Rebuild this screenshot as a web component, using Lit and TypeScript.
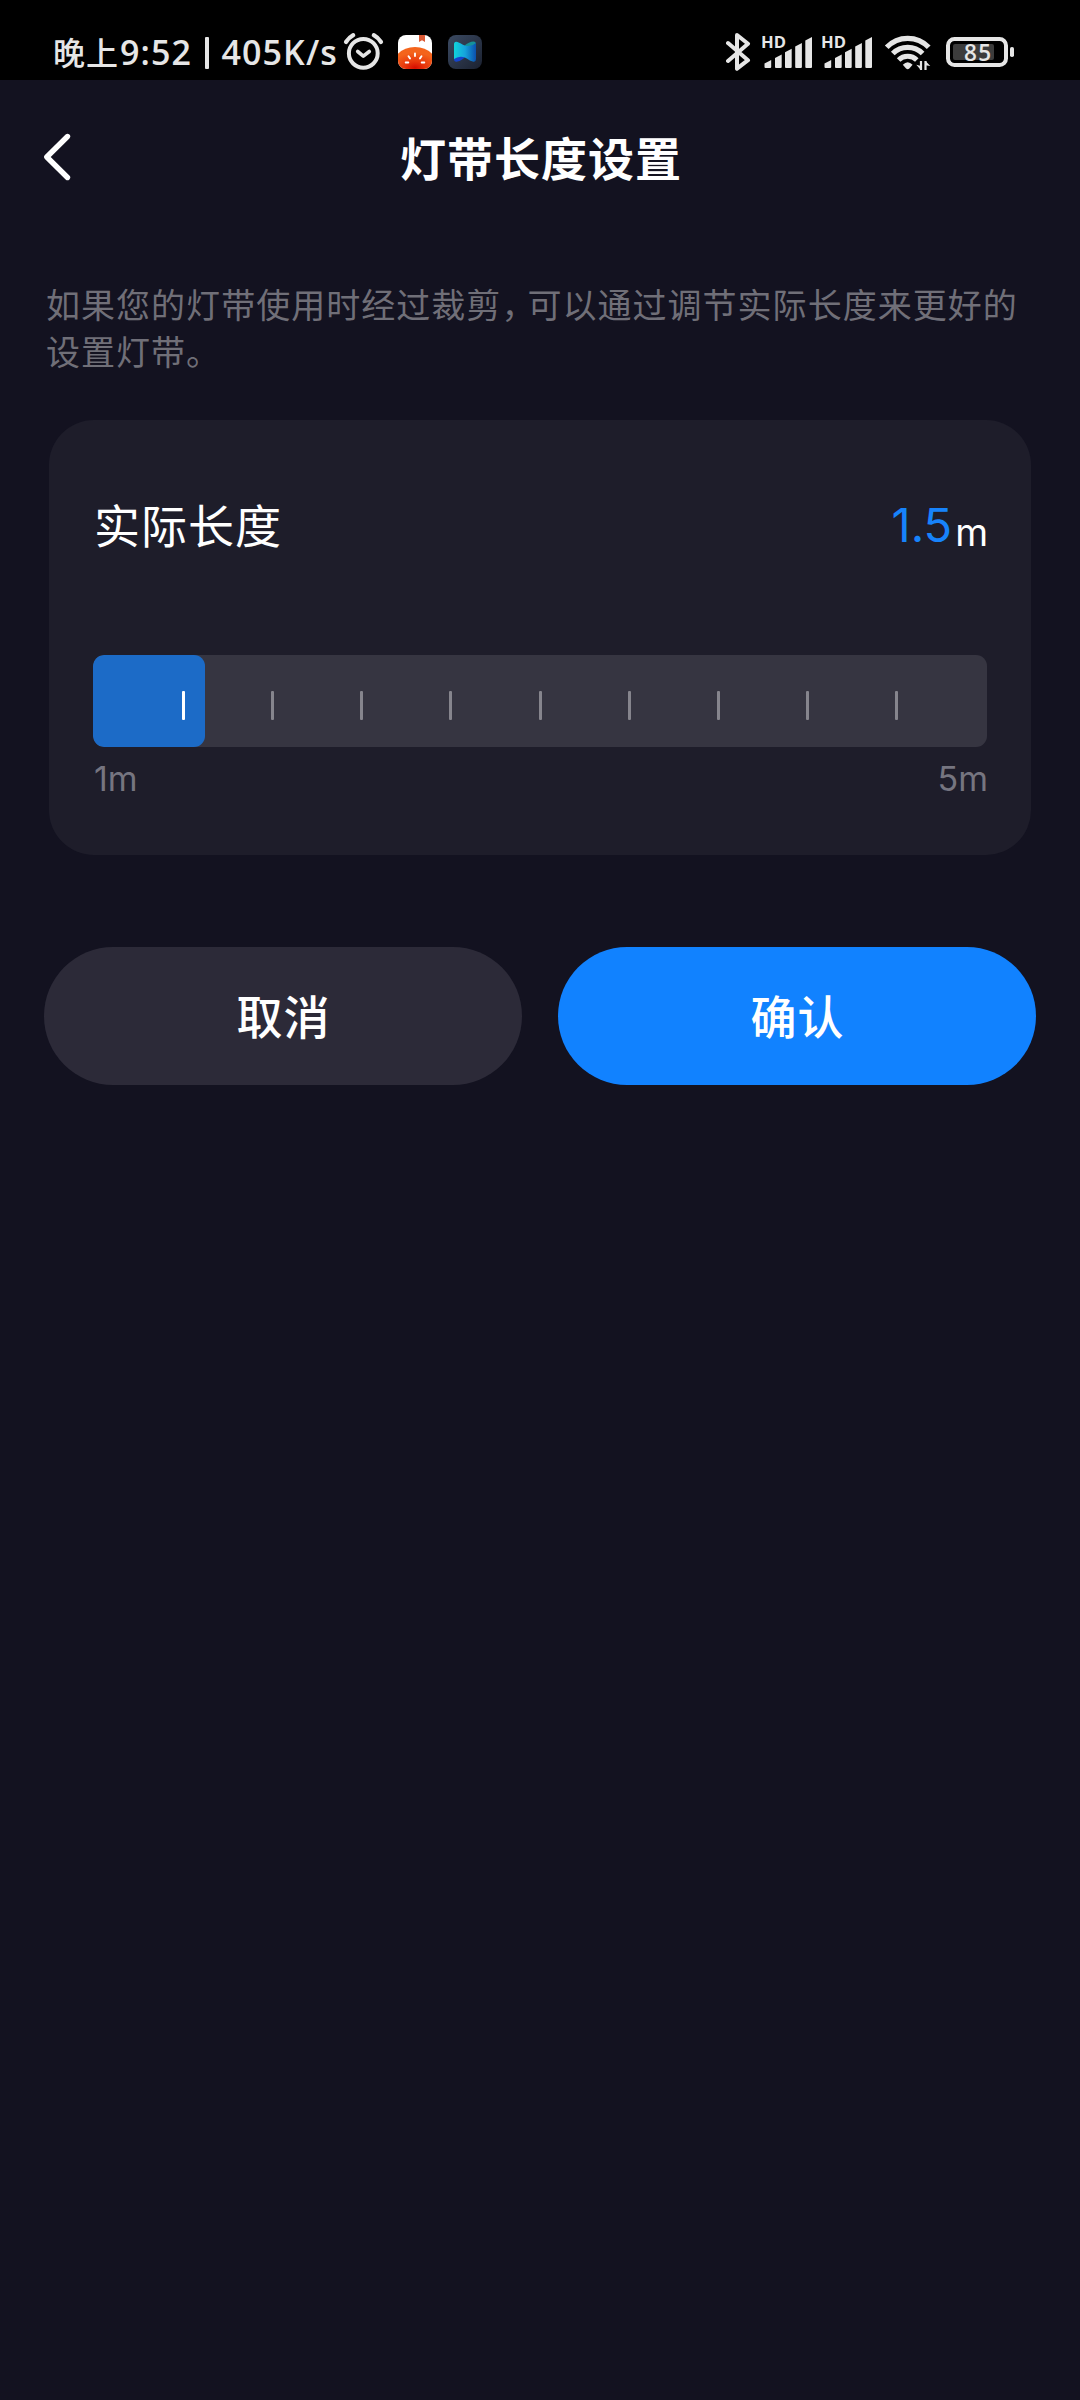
import { LitElement, html, css, svg } from "lit";
import { customElement, property, state } from "lit/decorators.js";

/** System status bar: clock, network speed, notification and radio icons. */
@customElement("status-bar")
class StatusBar extends LitElement {
  static styles = css`
    :host {
      display: flex;
      align-items: flex-start;
      box-sizing: border-box;
      height: 80px;
      padding: 0 66px 0 53px;
      background: #000;
      color: #e6e6e6;
    }
    .clock {
      display: flex;
      align-items: flex-start;
      width: 290px;
      height: 80px;
      font: 600 34px/40px "Open Sans", sans-serif;
      letter-spacing: 1.1px;
      white-space: pre;
    }
    .clock span {
      margin-top: 32px;
    }
    .clock .zh {
      margin-top: 31px;
      font: 500 32px/40px "Noto Sans CJK SC", sans-serif;
      letter-spacing: 1px;
      width: 67px;
    }
    .time {
      width: 85px;
    }
    .clock .bar {
      width: 4px;
      height: 32px;
      margin: 37px 12.5px 0 0;
      border-radius: 1px;
      background: #e6e6e6;
    }
    svg {
      display: block;
      flex: none;
      height: 80px;
    }
    .app {
      margin-left: 14px;
    }
    .app + .app {
      margin-left: 16px;
    }
    .right {
      display: flex;
      margin-left: auto;
    }
    .right svg + svg {
      margin-left: 10px;
    }
    .right svg + .wifi {
      margin-left: 12px;
    }
    .right .wifi + svg {
      margin-left: 14px;
    }
    .hd {
      font: 700 16px "Open Sans", sans-serif;
    }
    .pct {
      font: 600 22.5px "Open Sans", sans-serif;
    }
  `;

  private signal() {
    return html`<svg width="50" viewBox="762 0 50 80" fill="#e6e6e6">
      <text class="hd" x="761" y="47.7" textLength="25" lengthAdjust="spacingAndGlyphs">HD</text>
      ${[
        [764.5, 60],
        [775, 54.5],
        [785, 48.7],
        [795.2, 43],
        [805.3, 37],
      ].map(
        ([x, y]) =>
          svg`<path d=${`M${x} ${y + 3.6}L${x + 6.7} ${y}V67a1 1 0 0 1-1 1h-4.7a1 1 0 0 1-1-1z`} />`
      )}
    </svg>`;
  }

  render() {
    return html`
      <div class="clock">
        <span class="zh">晚上</span><span class="time">9:52</span><i class="bar"></i
        ><span>405K/s</span>
      </div>
      <svg width="41" viewBox="343 0 41 80" fill="none" stroke="#e6e6e6" stroke-linecap="round">
        <circle cx="363.3" cy="53.3" r="14.4" stroke-width="4" />
        <path d="M357.7 51.5l5.600 4.600 6-4.600" stroke-width="3.600" stroke-linejoin="round" />
        <path d="M346 42q3-4.500 7.200-6.800M381 42q-3-4.500-7.200-6.800" stroke-width="4.200" />
      </svg>
      <svg class="app" width="34" viewBox="398 0 34 80">
        <defs>
          <radialGradient id="tomato" cx=".5" cy=".9" r=".65">
            <stop offset="0" stop-color="#d60d00" />
            <stop offset=".4" stop-color="#e8360c" />
            <stop offset="1" stop-color="#f4641c" />
          </radialGradient>
          <clipPath id="tile"><rect x="398" y="35" width="34" height="34" rx="8" /></clipPath>
        </defs>
        <g clip-path="url(#tile)">
          <rect x="398" y="35" width="34" height="34" fill="#fff" />
          <path d="M419 35h6v7l-3-1.700-3 1.700z" fill="#dc5a35" />
          <path d="M396 56Q403 47 415 47t19 9v14h-38z" fill="url(#tomato)" />
          <path
            d="M415 53.500v2.600M408.500 56.300l1.500 2.100M421.500 56.300l-1.500 2.100M405.700 62.500h2.600M421.700 62.500h2.600"
            stroke="#fff"
            stroke-width="1.900"
            stroke-linecap="round"
          />
        </g>
      </svg>
      <svg class="app" width="34" viewBox="448 0 34 80">
        <defs>
          <linearGradient id="slate" x1="0" y1="0" x2="1" y2="1">
            <stop offset="0" stop-color="#3b4a62" />
            <stop offset="1" stop-color="#1b2130" />
          </linearGradient>
          <linearGradient id="ribbon">
            <stop offset="0" stop-color="#10d4dc" />
            <stop offset=".5" stop-color="#16a3dc" />
            <stop offset="1" stop-color="#0b50ae" />
          </linearGradient>
        </defs>
        <rect x="448" y="35" width="34" height="34" rx="8" fill="url(#slate)" />
        <path d="M464 46q5-4.500 9.500-4.500 2.500 0 2.500 3v4z" fill="#15929a" />
        <path d="M454 54v5q0 3.500 3.500 2.600 4-.9 9-5.600z" fill="#1544cc" />
        <path
          d="M454 44.500Q454 41 457.500 42q3 1 5.500 2.800 2.500 1.600 6 1.200 4-.6 7-3V59q0 3.500-3.300 2.500-3-.8-5.500-2.800-3-2.300-6.700-2-3.600.4-6.500 2.300z"
          fill="url(#ribbon)"
        />
      </svg>
      <div class="right">
        <svg width="26" viewBox="726 0 26 80" fill="none" stroke="#e6e6e6" stroke-width="4">
          <path
            d="M728 43l20 17.200-11 8.500V35l11 8.700-20 17.300"
            stroke-linecap="round"
            stroke-linejoin="round"
          />
        </svg>
        ${this.signal()} ${this.signal()}
        <svg class="wifi" width="48" viewBox="884 0 48 80" fill="none" stroke="#e6e6e6">
          <path d="M886.700 47.300a29 29 0 0 1 42 0" stroke-width="5.200" />
          <path d="M892.800 53.500a21 21 0 0 1 29.800 0" stroke-width="5.200" />
          <path d="M898.600 60a13 13 0 0 1 18.200 0" stroke-width="5" />
          <path d="M902.800 64.700q4.900-5 9.800 0L909.300 68.600q-1.600 1.200-3.200 0z" fill="#e6e6e6" stroke="none" />
          <path d="M921 61v9M925.500 70V61" stroke-width="2.200" />
          <path d="M916.300 64.700l4.700 1.300v4.200zM930.300 66l-4.800-.8V61z" fill="#e6e6e6" stroke="none" />
        </svg>
        <svg width="68" viewBox="946 0 68 80" fill="none">
          <rect x="948" y="39" width="58" height="26" rx="6.500" stroke="#e6e6e6" stroke-width="4" />
          <rect x="953" y="44" width="41" height="16" rx="2" fill="#3c3c3c" />
          <rect x="1010" y="47" width="4" height="10" rx="1.800" fill="#e6e6e6" />
          <text class="pct" x="964" y="60.800" textLength="27" fill="#e6e6e6">85</text>
        </svg>
      </div>
    `;
  }
}

/** Segmented strip-length slider with a tick before each step boundary. */
@customElement("length-slider")
class LengthSlider extends LitElement {
  @property({ type: Number }) min = 1;
  @property({ type: Number }) max = 5;
  @property({ type: Number }) value = 1.5;
  @property({ type: Number }) step = 0.5;

  static styles = css`
    :host {
      display: block;
    }
    .track {
      display: grid;
      height: 92px;
      border-radius: 11px;
      background: #363541;
      overflow: hidden;
    }
    .fill,
    .ticks {
      grid-area: 1 / 1;
    }
    .fill {
      border-radius: 11px;
      background: #1c6bc7;
    }
    .ticks {
      display: flex;
      justify-content: space-between;
      padding: 36px 89px 27px;
    }
    .tick {
      width: 3px;
      border-radius: 1px;
      background: #86858d;
    }
    .tick.on {
      background: #fff;
    }
    .ends {
      display: flex;
      justify-content: space-between;
      margin-top: 9px;
      padding-left: 1px;
      margin-right: -1px;
      font: 400 34px/46px Inter, sans-serif;
      color: #767580;
    }
  `;

  render() {
    const ratio = (this.value - this.min) / (this.max - this.min);
    const steps = (this.max - this.min) / this.step;
    return html`
      <div class="track">
        <div class="fill" style="width:${ratio * 100}%"></div>
        <div class="ticks">
          ${Array.from(
            { length: steps + 1 },
            (_, i) => html`<i class="tick ${i < ratio * steps ? "on" : ""}"></i>`
          )}
        </div>
      </div>
      <div class="ends"><span>${this.min}m</span><span>${this.max}m</span></div>
    `;
  }
}

@customElement("app-root")
class AppRoot extends LitElement {
  @state() private length = 1.5;

  static styles = css`
    :host {
      display: block;
      box-sizing: border-box;
      height: 2400px;
      background: #131220;
      color: #fff;
      font-family: "Noto Sans CJK SC", sans-serif;
    }
    header {
      display: grid;
      grid-template-columns: 80px 1fr 80px;
      align-items: center;
      height: 154px;
    }
    .back {
      display: block;
      margin-left: 40px;
    }
    h1 {
      margin: 0 0 3px;
      text-align: center;
      font-size: 46px;
      font-weight: 700;
      line-height: 60px;
      letter-spacing: 1px;
      text-indent: 2px;
    }
    .hint {
      margin: 46px 0 0;
      padding-left: 46px;
      font-size: 34px;
      line-height: 47px;
      letter-spacing: 1.03px;
      color: #706f78;
      white-space: nowrap;
    }
    .comma {
      letter-spacing: -8px;
    }
    .card {
      box-sizing: border-box;
      height: 435px;
      margin: 46px 49px 0;
      padding: 63px 44px 0;
      border-radius: 45px;
      background: #1e1d2a;
    }
    .row {
      display: flex;
      justify-content: space-between;
      height: 80px;
      margin-bottom: 92px;
      line-height: 80px;
    }
    .label {
      font-size: 46px;
      letter-spacing: 1px;
      padding-left: 1px;
    }
    .value {
      display: flex;
      font-family: Inter, sans-serif;
    }
    .num {
      padding-top: 2px;
      font-size: 47px;
      color: #1783fb;
    }
    .unit {
      margin: 0 -1px 0 3px;
      padding-top: 10px;
      font-size: 37.5px;
    }
    .actions {
      display: grid;
      grid-template-columns: 1fr 1fr;
      gap: 36px;
      margin: 92px 44px 0;
    }
    button {
      height: 138px;
      padding: 0 0 4px 1px;
      border: 0;
      border-radius: 69px;
      background: #2c2a38;
      color: #fff;
      font: 500 46px/60px "Noto Sans CJK SC", sans-serif;
      letter-spacing: 0.9px;
    }
    .ok {
      background: #1182ff;
    }
  `;

  render() {
    return html`
      <status-bar></status-bar>
      <header>
        <svg class="back" width="40" height="60" viewBox="40 127 40 60" fill="none">
          <path
            d="M67.500 136.500L46.800 157l20.700 20.500"
            stroke="#fff"
            stroke-width="5.400"
            stroke-linecap="round"
            stroke-linejoin="round"
          />
        </svg>
        <h1>灯带长度设置</h1>
      </header>
      <p class="hint">
        如果您的灯带使用时经过裁剪<span class="comma">，</span>可以通过调节实际长度来更好的<br />设置灯带。
      </p>
      <section class="card">
        <div class="row">
          <span class="label">实际长度</span>
          <span class="value"
            ><span class="num">${this.length}</span><span class="unit">m</span></span
          >
        </div>
        <length-slider .value=${this.length}></length-slider>
      </section>
      <div class="actions">
        <button>取消</button>
        <button class="ok">确认</button>
      </div>
    `;
  }
}
